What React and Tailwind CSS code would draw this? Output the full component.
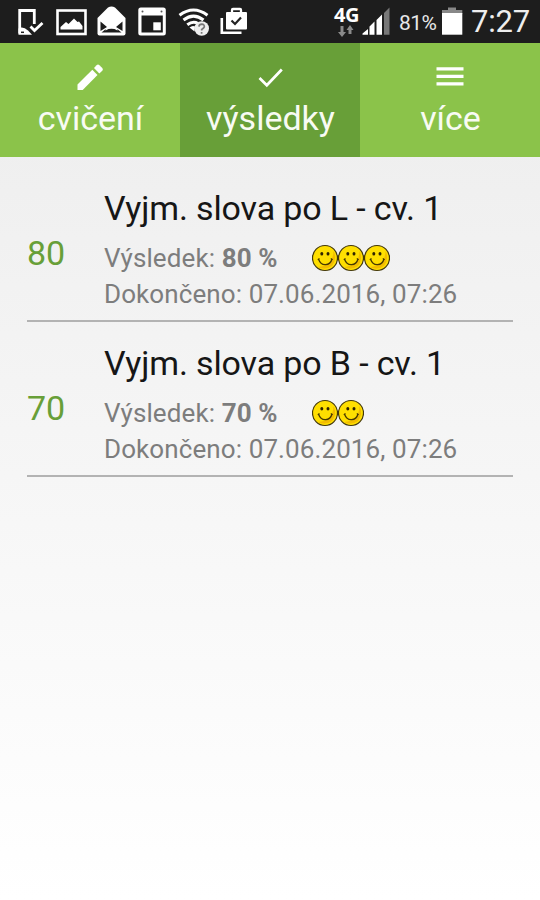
const results = [
  { score: 80, title: "Vyjm. slova po L - cv. 1", date: "07.06.2016, 07:26", smiles: 3 },
  { score: 70, title: "Vyjm. slova po B - cv. 1", date: "07.06.2016, 07:26", smiles: 2 },
];

const PhoneIcon = () => (
  <svg width="28" height="43" viewBox="17 0 28 43" fill="none">
    <path d="M19.7 33.5V10.5H34.3V24" stroke="#fff" strokeWidth="2.8" />
    <path d="M18.5 28.5Q23 26 28 30.500L32 34.7H18.5Z" fill="#fff" />
    <path d="M21 32.3h3" stroke="#222" strokeWidth="1.5" />
    <path d="M30.5 26.5L34.5 30.5L42.5 23" stroke="#fff" strokeWidth="2.8" />
  </svg>
);

const ImageIcon = () => (
  <svg width="31" height="43" viewBox="56.5 0 31 43">
    <rect x="58" y="10.500" width="28" height="23.500" fill="none" stroke="#fff" strokeWidth="2.6" />
    <path d="M61 29.500V27L66.500 22L69 24L74.500 18.500L78 22L79.500 21.500L83 26V29.500Z" fill="#fff" />
  </svg>
);

const MailIcon = () => (
  <svg width="30" height="43" viewBox="97 0 30 43">
    <path d="M97.5 18L108 7.5Q111.5 5.5 115 7.5L125.5 18V33.5Q125.5 35.5 123.5 35.5H99.5Q97.5 35.5 97.5 33.5Z" fill="#fff" />
    <path d="M100.5 21.5L107 27L100.5 31ZM122.5 21.5L116 27L122.5 31ZM101.500 32.500L106.5 28.5H116.5L121.5 32.5Z" fill="#1c1c1c" />
    <path d="M105.5 30.5Q111.5 26.5 117.5 30.500V28H105.5Z" fill="#fff" />
  </svg>
);

const CalendarIcon = () => (
  <svg width="30" height="43" viewBox="137 0 30 43">
    <rect x="138.3" y="7.5" width="27.5" height="28" rx="2.5" fill="#fff" />
    <path d="M141.5 15.5H162.8V32.500H141.5Z" fill="#1c1c1c" />
    <rect x="153.3" y="22.3" width="7.5" height="8" fill="#fff" />
    <circle cx="142.5" cy="11.5" r="1" fill="#555" />
    <circle cx="161.5" cy="11.5" r="1" fill="#555" />
  </svg>
);

const WifiIcon = () => (
  <svg width="32" height="43" viewBox="177 0 32 43">
    <g fill="none" stroke="#fff" strokeWidth="3">
      <path d="M178.5 15.2Q192.5 4.8 206.5 15.2" />
      <path d="M182.5 20Q192.5 12.2 202.5 20" />
      <path d="M186.3 24.8Q192 20.5 197 23.5" />
    </g>
    <path d="M188.5 27.5Q191.5 25 194 26.5L193.5 31.5Z" fill="#fff" />
    <circle cx="200.7" cy="28.5" r="7.3" fill="#eee" />
    <path d="M197.9 26.7Q198.2 24.2 200.8 24.2Q203.7 24.4 203.3 26.9Q202.8 28.3 200.7 29.5V30.5M200.6 32v1.7" fill="none" stroke="#777" strokeWidth="1.7" />
  </svg>
);

const StoreIcon = () => (
  <svg width="29" height="43" viewBox="220 0 29 43" fill="none">
    <path d="M221.8 18V32.7H241.5" stroke="#fff" strokeWidth="2.6" />
    <path d="M226 13Q226 12 227 12H246Q247 12 247 13V28.5Q247 29.5 246 29.5H227Q226 29.5 226 28.5Z" fill="#fff" />
    <path d="M232 12V10Q232 9 233 9H240Q241 9 241 10V12" stroke="#fff" strokeWidth="2.3" />
    <path d="M231.5 20.5L235 24L241 17.5" stroke="#222" strokeWidth="2.2" />
  </svg>
);

const DataArrows = () => (
  <svg width="16" height="12" viewBox="338 23 16 12" fill="#8a8a8a">
    <path d="M340.5 24H343.5V30H346L342 35L338 30H340.5Z" />
    <path d="M348.5 32H351.5V28H353.5L350 23L346.5 28H348.5Z" />
  </svg>
);

const SignalIcon = () => (
  <svg width="28" height="43" viewBox="362 0 28 43">
    <path d="M362.5 34.8V33.5L368 29V34.8ZM369.5 34.8V26.5L374.5 21.5V34.8ZM376.5 34.8V20L382 14.5V34.8Z" fill="#fff" />
    <path d="M384 34.8V13L389.5 7.500V34.8Z" fill="#777" />
  </svg>
);

const BatteryIcon = () => (
  <svg width="22" height="43" viewBox="441 0 22 43">
    <path d="M442 14V10H448V7.5H456V10H462.3V14Z" fill="#888" />
    <rect x="442" y="13" width="20.3" height="21.7" fill="#fff" />
  </svg>
);

const StatusBar = () => (
  <div className="flex h-[43px] items-center overflow-hidden bg-[#1d1d1d] text-white">
    <div className="flex w-[334px] pl-[17px]">
      <PhoneIcon />
      <div className="ml-[11px]"><ImageIcon /></div>
      <div className="ml-[10px]"><MailIcon /></div>
      <div className="ml-[10px]"><CalendarIcon /></div>
      <div className="ml-[11px]"><WifiIcon /></div>
      <div className="ml-[10px]"><StoreIcon /></div>
    </div>
    <div className="flex w-7 flex-col">
      <span className="h-[17px] font-['Open_Sans',sans-serif] text-[20px] leading-[15px] font-bold tracking-[-0.5px]">4G</span>
      <div className="ml-1 pt-px"><DataArrows /></div>
    </div>
    <SignalIcon />
    <span className="ml-[9px] w-[42px] pt-[3px] text-[21px] leading-6 tracking-[-0.5px] whitespace-nowrap text-[#e8e8e8]">81%</span>
    <BatteryIcon />
    <span className="ml-[8px] text-[31px] leading-[43px] tracking-[-0.2px] whitespace-nowrap text-[#eee]">7:27</span>
  </div>
);

const PencilIcon = () => (
  <svg width="28" height="28" viewBox="76 63 28 28" fill="#fff">
    <path d="M77.5 90V84.5L92.3 69.700L97.5 75L82.7 90Z" />
    <path d="M94 68L96.6 65.2Q98 64 99.4 65.2L102.3 68.1Q103.5 69.5 102.3 70.8L99.3 73.4Z" />
  </svg>
);

const CheckIcon = () => (
  <svg width="28" height="28" viewBox="256 63 28 28" fill="none">
    <path d="M259.5 78L266.8 85.3L281.8 69.5" stroke="#fff" strokeWidth="2.7" />
  </svg>
);

const MenuIcon = () => (
  <svg width="28" height="28" viewBox="436 63 28 28" fill="#fff">
    <path d="M436.5 67.3H463.5V70.5H436.5ZM436.5 74.8H463.5V78H436.5ZM436.5 82.3H463.5V85.5H436.5Z" />
  </svg>
);

const Tab = ({ icon, label, active }) => (
  <button
    className={`flex h-[113.5px] flex-1 flex-col items-center pt-5 text-[#f8fbf3] ${
      active ? "bg-[#689f38]" : "bg-[#8bc34a]"
    }`}
  >
    {icon}
    <span className="mt-[6px] pl-px text-[34px] leading-[42px]">{label}</span>
  </button>
);

const Smile = () => (
  <svg width="26" height="28" viewBox="0 0 26 28">
    <circle cx="13" cy="14" r="12.5" fill="#ffdf00" stroke="#42370b" strokeWidth="1.2" />
    <path d="M21.5 7Q25.5 15 20 22Q13 27 6 23Q21 22 21.5 7Z" fill="#f3bd00" />
    <ellipse cx="9.8" cy="9.8" rx="1.5" ry="1.7" fill="#302400" />
    <ellipse cx="16" cy="9.8" rx="1.5" ry="1.7" fill="#302400" />
    <path d="M6.500 15Q8.500 21 13.500 20.7Q18.500 20.500 20 15M5.800 15.7L7.500 14.500M18.800 14.500L20.700 15.7" fill="none" stroke="#493a00" strokeWidth="1.3" />
  </svg>
);

const ResultRow = ({ item }) => (
  <li className="flex h-[155px] items-center border-b-2 border-[#b3b3b3]">
    <span className="w-[77px] pt-[18px] text-[34px] leading-10 text-[#689f38]">{item.score}</span>
    <div className="pt-[11px] whitespace-nowrap">
      <h2 className="text-[34px] leading-[44px] tracking-[-0.14px] text-[#161616]">{item.title}</h2>
      <div className="mt-[10px] flex h-9 items-center text-[26px] leading-9 tracking-[0.1px] text-[#7d7d7d]">
        <p className="w-[208px]">
          Výsledek: <b className="font-bold">{item.score} %</b>
        </p>
        <div className="flex">
          {Array.from({ length: item.smiles }, (_, i) => (
            <Smile key={i} />
          ))}
        </div>
      </div>
      <p className="text-[26px] leading-9 tracking-[0.1px] text-[#7d7d7d]">Dokončeno: {item.date}</p>
    </div>
  </li>
);

const App = () => {
  return (
    <div className="h-[900px] w-[540px] overflow-hidden bg-linear-to-b from-[#ececec] to-white font-[Roboto,sans-serif]">
      <StatusBar />
      <nav className="flex">
        <Tab icon={<PencilIcon />} label="cvičení" />
        <Tab icon={<CheckIcon />} label="výsledky" active />
        <Tab icon={<MenuIcon />} label="více" />
      </nav>
      <ul className="px-[27px] pt-[10.5px]">
        {results.map((item) => (
          <ResultRow key={item.score} item={item} />
        ))}
      </ul>
    </div>
  );
};

export default App;
